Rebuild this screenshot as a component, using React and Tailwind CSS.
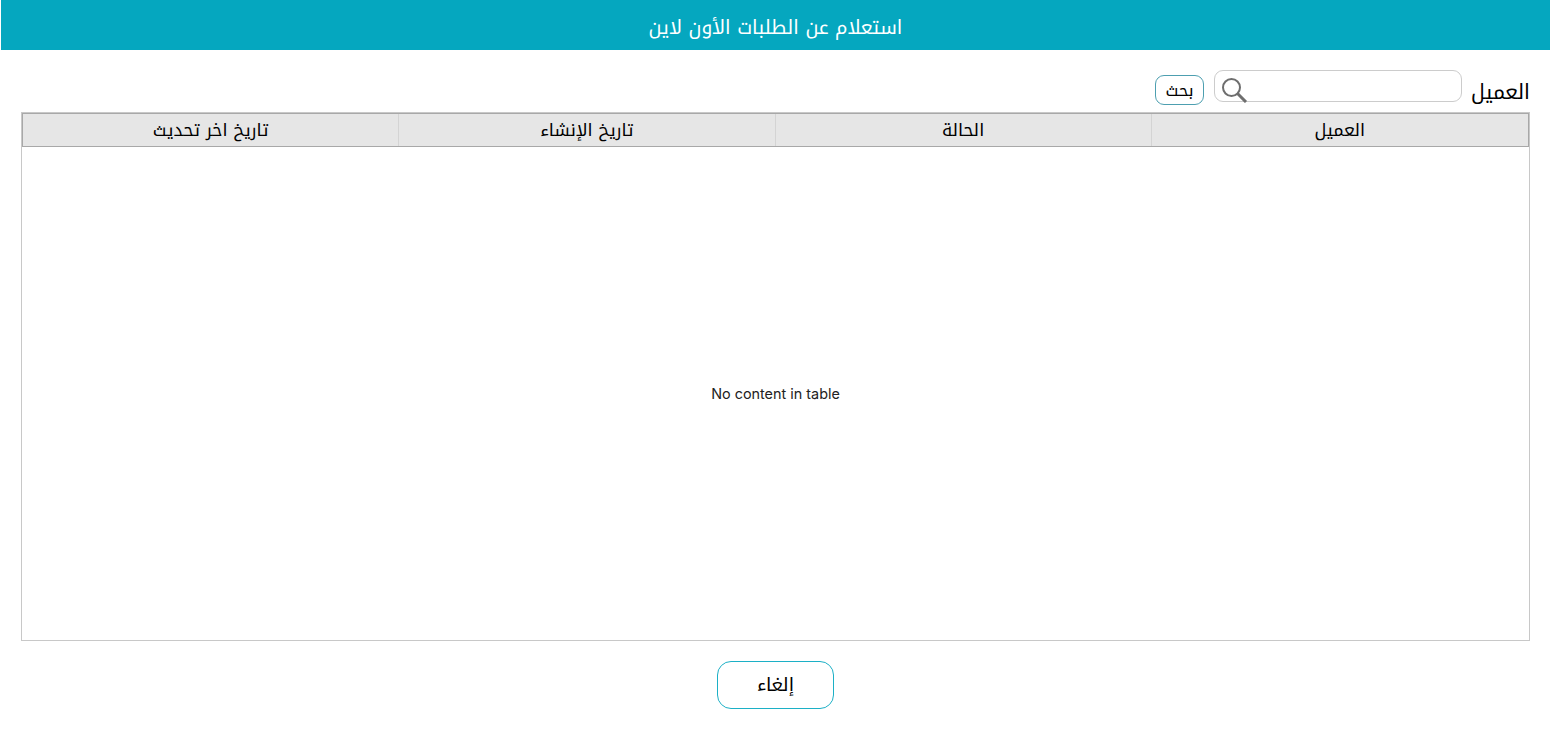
const font = "font-['Noto_Kufi_Arabic','Noto_Sans',sans-serif]";

function SearchIcon() {
  return (
    <svg className="absolute left-[7px] top-[6px] h-[26px] w-[26px]" viewBox="0 0 26 26" fill="none">
      <circle cx="9.5" cy="10.5" r="8.5" stroke="#6e6e6e" strokeWidth="2" />
      <path d="M15.5 16.5l8.5 8.5" stroke="#6e6e6e" strokeWidth="3" />
    </svg>
  );
}

const columns = ["العميل", "الحالة", "تاريخ الإنشاء", "تاريخ اخر تحديث"];

export default function App() {
  return (
    <div dir="rtl" className={`flex h-[734px] w-[1550px] flex-col bg-white text-black ${font}`}>
      <header className="ml-px flex h-[50px] items-center justify-center bg-[#05a7bf] pt-[6px] text-[19.2px] text-white">
        استعلام عن الطلبات الأون لاين
      </header>
      <main className="flex flex-col pr-5 pl-[21px]">
        <div className="flex h-[62px] items-start pt-5">
          <label className="mt-[9px] ml-[10px] w-[58px] whitespace-nowrap text-[20.4px] leading-[28px]">العميل</label>
          <div className="relative ml-[10px] h-8 w-[248px] rounded-[9px] border border-[#cccccc]">
            <SearchIcon />
          </div>
          <button className="mt-[5px] flex h-[30px] w-[49px] items-center justify-center rounded-[9px] border border-[#4d9fb0] pt-[2px] text-[16.5px]">
            بحث
          </button>
        </div>
        <section className="flex h-[529px] flex-col border border-[#c8c8c8]">
          <div className="grid h-[34px] grid-cols-4 border border-[#a8a8a8] bg-[#e6e6e6]">
            {columns.map((c) => (
              <div key={c} className="flex items-center justify-center border-r border-[#d4d4d4] pt-[3px] text-[17.5px] first:border-r-0">
                {c}
              </div>
            ))}
          </div>
          <div dir="ltr" className="flex flex-1 items-center justify-center font-['Inter',sans-serif] text-[14.4px] text-[#222222]">
            No content in table
          </div>
        </section>
        <div className="flex justify-center pt-5">
          <button className="h-12 w-[117px] rounded-[14px] border border-[#1cb0c6] text-[18.5px]">إلغاء</button>
        </div>
      </main>
    </div>
  );
}
